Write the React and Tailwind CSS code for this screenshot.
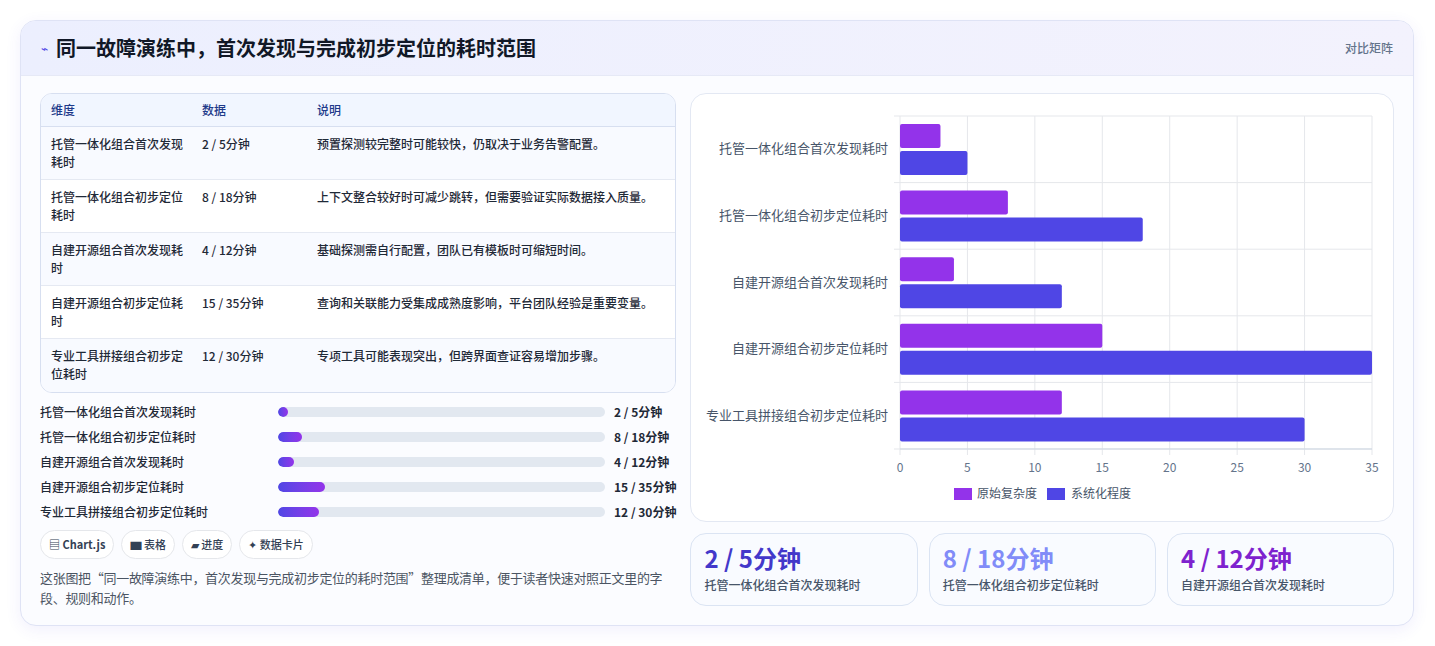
import React from "react";

const rows = [
  ["托管一体化组合首次发现耗时", "2 / 5分钟", "预置探测较完整时可能较快，仍取决于业务告警配置。", 3, 5],
  ["托管一体化组合初步定位耗时", "8 / 18分钟", "上下文整合较好时可减少跳转，但需要验证实际数据接入质量。", 8, 18],
  ["自建开源组合首次发现耗时", "4 / 12分钟", "基础探测需自行配置，团队已有模板时可缩短时间。", 4, 12],
  ["自建开源组合初步定位耗时", "15 / 35分钟", "查询和关联能力受集成成熟度影响，平台团队经验是重要变量。", 15, 35],
  ["专业工具拼接组合初步定位耗时", "12 / 30分钟", "专项工具可能表现突出，但跨界面查证容易增加步骤。", 12, 30],
];
const prog = [10, 24, 16, 47, 41];

function Chart() {
  const x0 = 209, x1 = 681, y0 = 22, y1 = 355;
  const u = (x1 - x0) / 35;
  const band = (y1 - y0) / 5;
  return (
    <svg width="704" height="429" className="block">
      {[0, 5, 10, 15, 20, 25, 30, 35].map((t) => (
        <g key={t}>
          <line x1={x0 + t * u} x2={x0 + t * u} y1={y0} y2={y1 + 6} stroke="#e5e7eb" />
          <text x={x0 + t * u} y={378} textAnchor="middle" fontSize="12" fill="#64748b">{t}</text>
        </g>
      ))}
      {[0, 1, 2, 3, 4, 5].map((i) => (
        <line key={i} x1={x0 - 6} x2={x1} y1={y0 + i * band} y2={y0 + i * band} stroke="#e5e7eb" />
      ))}
      <line x1={x0} x2={x1} y1={y1} y2={y1} stroke="#cbd5e1" />
      {rows.map((r, i) => {
        const top = y0 + i * band;
        return (
          <g key={i}>
            <text x={x0 - 12} y={top + band / 2 + 4} textAnchor="end" fontSize="13" fill="#475569">{r[0]}</text>
            <rect x={x0} y={top + 8} width={r[3] * u} height={24} fill="#9333ea" rx="2" />
            <rect x={x0} y={top + 35} width={r[4] * u} height={24} fill="#4f46e5" rx="2" />
          </g>
        );
      })}
      <rect x="263" y="394" width="18" height="12" fill="#9333ea" />
      <text x="286" y="404" fontSize="12" fill="#475569">原始复杂度</text>
      <rect x="356" y="394" width="18" height="12" fill="#4f46e5" />
      <text x="380" y="404" fontSize="12" fill="#475569">系统化程度</text>
    </svg>
  );
}

export default function App() {
  return (
    <div className="w-[1435px] h-[646px] bg-white p-[20px] pr-[21px]" style={{ fontFamily: "'Noto Sans CJK SC', 'Noto Sans', sans-serif" }}>
      <div className="rounded-2xl border border-[#dfe3f5] bg-[#fbfcff] shadow-[0_4px_16px_rgba(79,70,229,0.08)] overflow-hidden h-[606px]">
        <div className="h-[55px] flex items-center justify-between px-[20px] bg-gradient-to-r from-[#eceffe] to-[#f3f2fd] border-b border-[#e6e9f6]">
          <div className="flex items-center gap-[8px]">
            <span className="text-[#4f46e5] text-[12px]">⌁</span>
            <span className="text-[20px] font-bold text-[#111827]">同一故障演练中，首次发现与完成初步定位的耗时范围</span>
          </div>
          <span className="text-[12px] text-[#64748b] font-medium">对比矩阵</span>
        </div>
        <div className="flex gap-[14px] px-[19px] pt-[17px]">
          <div className="w-[638px] flex flex-col">
            <div className="rounded-xl border border-[#d7dff0] overflow-hidden bg-white">
              <div className="flex h-[33px] items-center bg-[#f1f6ff] border-b border-[#d7dff0] text-[12px] text-[#1e3a8a] font-medium">
                <div className="w-[161px] pl-[10px]">维度</div>
                <div className="w-[115px]">数据</div>
                <div className="flex-1">说明</div>
              </div>
              {rows.map((r, i) => (
                <div key={i} className={`flex h-[53px] pt-[8px] text-[12px] leading-[18px] font-medium text-[#1f2937] ${i < 4 ? "border-b border-[#e5e9f2]" : ""} ${i % 2 ? "bg-white" : "bg-[#f8faff]"}`}>
                  <div className="w-[161px] pl-[10px] pr-[16px]">{r[0]}</div>
                  <div className="w-[115px]">{r[1]}</div>
                  <div className="flex-1">{r[2]}</div>
                </div>
              ))}
            </div>
            <div className="mt-[6px] flex flex-col">
              {rows.map((r, i) => (
                <div key={i} className="flex items-center h-[25px] text-[12px] font-medium text-[#1f2937]">
                  <div className="w-[238px] whitespace-nowrap">{r[0]}</div>
                  <div className="w-[327px] shrink-0 h-[10px] rounded-full bg-[#e2e8f0] overflow-hidden">
                    <div className="h-full rounded-full bg-gradient-to-r from-[#4f46e5] to-[#9333ea]" style={{ width: `${prog[i]}px` }} />
                  </div>
                  <div className="ml-[9px] font-bold whitespace-nowrap">{r[1]}</div>
                </div>
              ))}
            </div>
            <div className="flex gap-[7px] mt-[6px]">
              {["▤ Chart.js", "▆ 表格", "▰ 进度", "✦ 数据卡片"].map((c, i) => (
                <span key={i} className={`h-[29px] px-[8px] flex items-center rounded-full border border-[#e5e7eb] bg-white text-[11px] text-[#334155] ${i === 0 ? "font-bold" : "font-medium"}`}>{c}</span>
              ))}
            </div>
            <p className="mt-[9px] text-[13px] leading-[20px] text-[#4b5563] tracking-[-0.3px]">这张图把“同一故障演练中，首次发现与完成初步定位的耗时范围”整理成清单，便于读者快速对照正文里的字段、规则和动作。</p>
          </div>
          <div className="w-[704px] flex flex-col gap-[11px]">
            <div className="h-[429px] rounded-2xl border border-[#e3e8f3] bg-white">
              <Chart />
            </div>
            <div className="grid grid-cols-3 gap-[11px]">
              {[["2 / 5分钟", "text-[#4338ca]", rows[0][0]], ["8 / 18分钟", "text-[#818cf8]", rows[1][0]], ["4 / 12分钟", "text-[#7e22ce]", rows[2][0]]].map((s, i) => (
                <div key={i} className="h-[73px] rounded-2xl border border-[#dbe4f3] bg-[#f9fbff] px-[13px] pt-[8px]">
                  <div className={`text-[24px] leading-[32px] font-bold ${s[1]}`}>{s[0]}</div>
                  <div className="text-[12px] text-[#475569] font-medium mt-[2px]">{s[2]}</div>
                </div>
              ))}
            </div>
          </div>
        </div>
      </div>
    </div>
  );
}
